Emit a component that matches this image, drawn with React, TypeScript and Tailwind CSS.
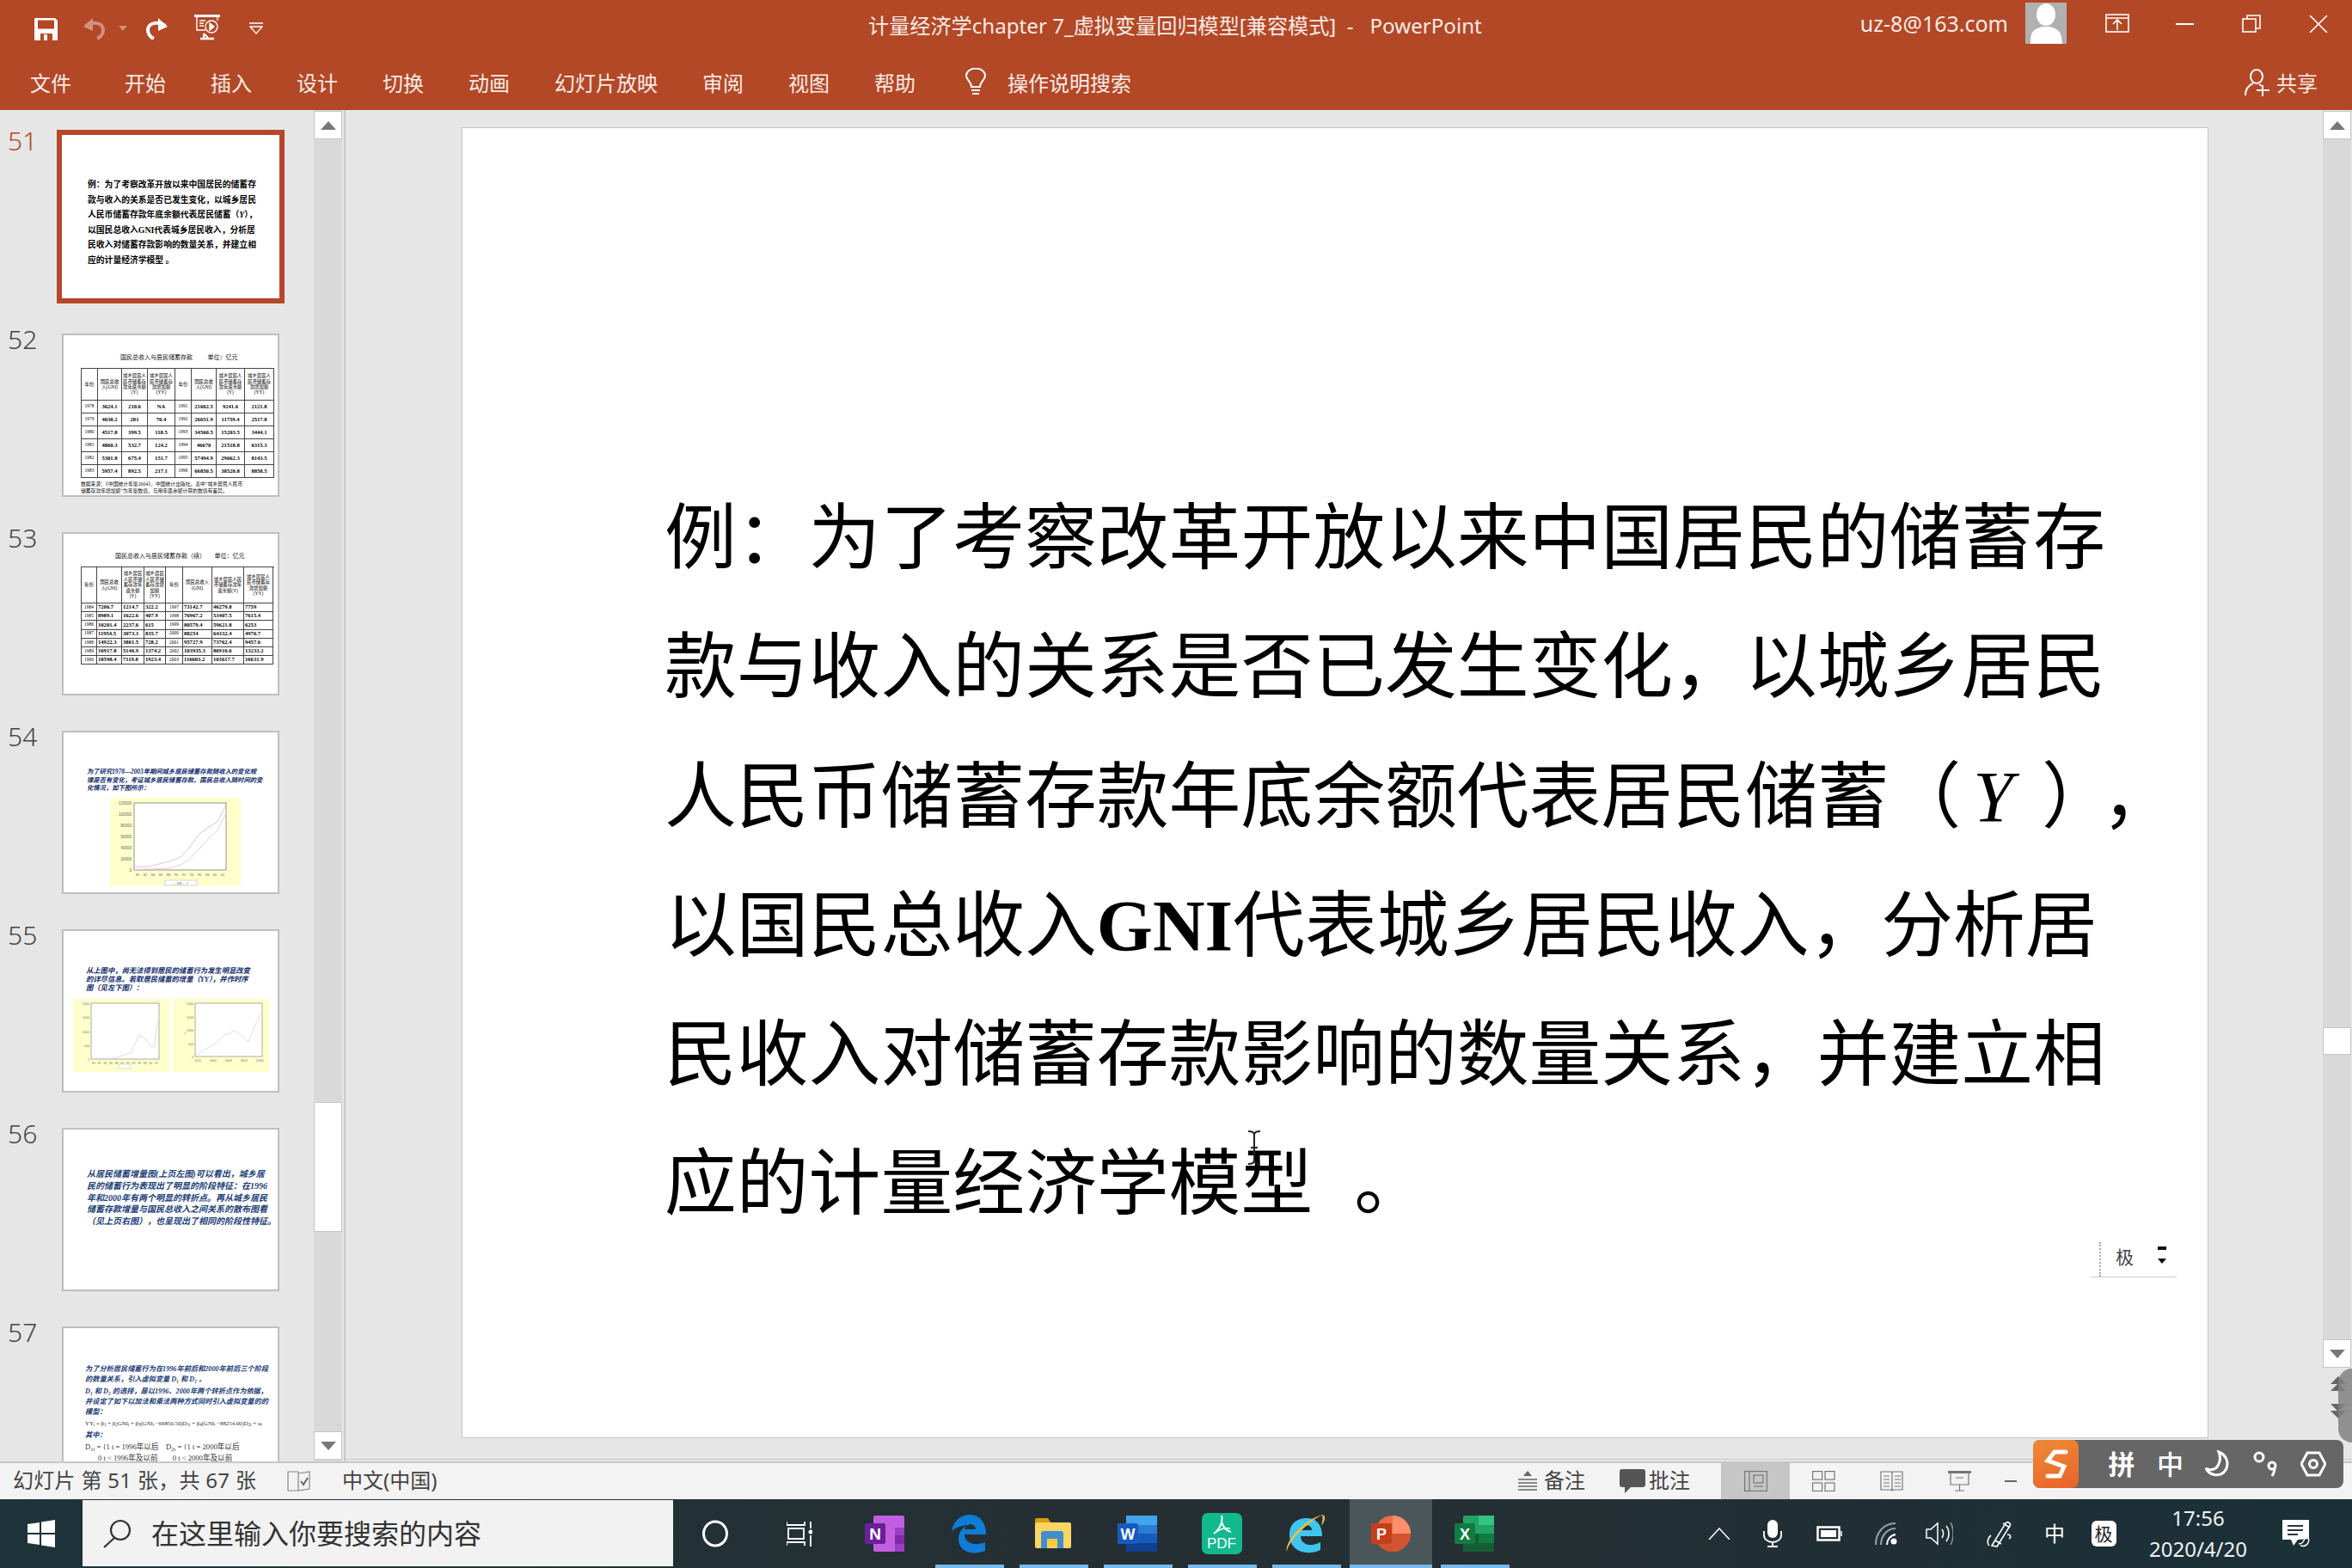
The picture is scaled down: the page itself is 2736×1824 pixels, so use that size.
import React from "react";

const UI = "font-['Noto_Sans','Noto_Sans_CJK_SC',sans-serif]";
const BAR = "bg-[#b34827]";

function Save() {
  return (
    <svg width="27" height="26" viewBox="0 0 27 26" className="mt-1">
      <path fill="#fff" d="M1 0h23l3 3v22a1 1 0 0 1-1 1H1a1 1 0 0 1-1-1V1a1 1 0 0 1 1-1z" />
      <rect x="4" y="2.500" width="19" height="10" fill="#b34827" />
      <rect x="7" y="18" width="14" height="8" fill="#b34827" />
      <rect x="11" y="19" width="4" height="7" fill="#fff" />
    </svg>
  );
}
function Undo({ flip, dim }: { flip?: boolean; dim?: boolean }) {
  return (
    <svg width="28" height="26" viewBox="0 0 28 26" className={(flip ? "-scale-x-100 " : "") + (dim ? "opacity-40" : "")}>
      <path d="M4 10 C 9 5, 24 5, 24 15 C 24 20, 20 24, 17 25" fill="none" stroke="#fff" strokeWidth="4" />
      <path d="M1 11 L12 1 L12 16 Z" fill="#fff" />
    </svg>
  );
}
function Present() {
  return (
    <svg width="32" height="30" viewBox="0 0 32 30" fill="none" stroke="#fff" strokeWidth="1.4">
      <path d="M1 1.5h30" strokeWidth="3" />
      <path d="M4 2v16h10M28 2v5" />
      <path d="M7 7h7M7 10h5M7 13h5" />
      <circle cx="21" cy="14" r="7" />
      <path d="M19 10l5 4-5 4z" fill="#fff" />
      <path d="M8 28h16" strokeWidth="2.5" />
      <path d="M12 22l5 5M12 22v5" strokeWidth="2" />
    </svg>
  );
}
function Bulb() {
  return (
    <svg width="26" height="34" viewBox="0 0 26 34" fill="none" stroke="#fff" strokeWidth="2">
      <path d="M8 22 C 8 16 2 14 2 9 A 11 8.5 0 0 1 24 9 C 24 14 18 16 18 22 Z" />
      <path d="M8 26h10M9 30h8" />
    </svg>
  );
}
function Share() {
  return (
    <svg width="30" height="32" viewBox="0 0 30 32" fill="none" stroke="#fff" strokeWidth="2">
      <ellipse cx="14" cy="9" rx="7" ry="8" />
      <path d="M1 31 C 1 23 5 19 10 17M17 18 L20 20" />
      <path d="M21 19v13M14 25h15" />
    </svg>
  );
}

function TopBar() {
  const tabs = ["开始", "插入", "设计", "切换", "动画", "幻灯片放映", "审阅", "视图", "帮助"];
  return (
    <header className={`${BAR} h-[128px] shrink-0 text-white ${UI}`}>
      <div className="h-[58px] flex items-start">
        <div className="w-[1010px] shrink-0 flex items-start pt-[17px] pl-[40px]">
          <Save />
          <div className="ml-[29px] mt-[3px]"><Undo dim /></div>
          <svg width="10" height="6" viewBox="0 0 10 6" className="ml-[14px] mt-[13px] opacity-40"><path d="M0 0h10L5 6z" fill="#fff" /></svg>
          <div className="ml-[20px] mt-[3px]"><Undo flip /></div>
          <div className="ml-[29px]"><Present /></div>
          <svg width="16" height="14" viewBox="0 0 16 14" className="ml-[33px] mt-[9px]" fill="none" stroke="#fff" strokeWidth="1.3"><path d="M0 1h16M1 5l7 8 7-8z" /></svg>
        </div>
        <div className="pt-[13px] text-[24.15px] leading-[34px] whitespace-pre text-[#f7ebe6]">计量经济学chapter 7_虚拟变量回归模型[兼容模式]  -   PowerPoint</div>
        <div className="ml-auto flex items-start">
          <div className="pt-[9px] text-[25px] leading-[36px] mr-[20px] text-[#f7ebe6]">uz-8@163.com</div>
          <div className="w-[48px] h-[48px] mt-[3px] bg-[#b0b0b0] overflow-hidden">
            <svg width="48" height="48" viewBox="0 0 48 48"><ellipse cx="24" cy="14" rx="11" ry="13" fill="#fff" /><path d="M6 48 C 6 32 10 31 20 28h8 C 38 31 42 32 43 48z" fill="#fff" /></svg>
          </div>
          <svg width="28" height="22" viewBox="0 0 28 22" className="ml-[45px] mt-[16px]" fill="none" stroke="#fff" strokeWidth="1.6"><rect x="1" y="1" width="26" height="20" /><path d="M1 5h26M14 19V8M9 12l5-5 5 5" /></svg>
          <div className="ml-[54px] mt-[27px] w-[21px] h-[2px] bg-white" />
          <svg width="22" height="21" viewBox="0 0 22 21" className="ml-[56px] mt-[17px]" fill="none" stroke="#fff" strokeWidth="1.6"><rect x="1" y="5" width="15" height="15" /><path d="M6 5V1h15v15h-5" /></svg>
          <svg width="22" height="20" viewBox="0 0 22 20" className="ml-[56px] mt-[18px] mr-[28px]" fill="none" stroke="#fff" strokeWidth="1.6"><path d="M1 0l20 20M21 0L1 20" /></svg>
        </div>
      </div>
      <div className="h-[70px] flex items-start pl-[35px] pt-[26px] text-[24px] leading-[26px] text-[#f7ebe6]">
        <span className="mr-[62px]">文件</span>
        <div className="flex gap-[52px]">{tabs.map((t) => <span key={t}>{t}</span>)}</div>
        <div className="ml-[57px] -mt-[5px]"><Bulb /></div>
        <span className="ml-[24px]">操作说明搜索</span>
        <div className="ml-auto flex items-start pr-[40px]">
          <div className="-mt-[4px] mr-[7px]"><Share /></div>
          <span>共享</span>
        </div>
      </div>
    </header>
  );
}

function ScrollBtn({ dir }: { dir: "up" | "down" }) {
  return (
    <div className="h-[33px] bg-white border border-[#c6c6c6] flex items-center justify-center shrink-0">
      <svg width="18" height="10" viewBox="0 0 18 10"><path d={dir === "up" ? "M9 0l9 10H0z" : "M0 0h18L9 10z"} fill="#777" /></svg>
    </div>
  );
}

function Cell({ children, bold, tall, left }: { children?: React.ReactNode; bold?: boolean; tall?: boolean; left?: boolean }) {
  return (
    <div className={`border-r border-b border-[#444] flex items-center text-center overflow-hidden text-black ${left ? "justify-start pl-[1px]" : "justify-center"} ${bold ? "font-bold text-[6.6px]" : "text-[5.4px]"} ${tall ? "leading-[6.4px] px-[1px]" : "leading-none"}`}>
      {children}
    </div>
  );
}

const H52 = ["年份", "国民总收入(GNI)", "城乡居民人民币储蓄存款年底余额(Y)", "城乡居民人民币储蓄存款增加额(YY)"];
const R52 = [
  "1978 3624.1 210.6 NA 1991 21662.5 9241.6 2121.8",
  "1979 4038.2 281 70.4 1992 26651.9 11759.4 2517.8",
  "1980 4517.8 399.5 118.5 1993 34560.5 15203.5 3444.1",
  "1981 4860.3 532.7 124.2 1994 46670 21518.8 6315.3",
  "1982 5301.8 675.4 151.7 1995 57494.9 29662.3 8143.5",
  "1983 5957.4 892.5 217.1 1996 66850.5 38520.8 8858.5",
];
const R53 = [
  "1984 7206.7 1214.7 322.2 1997 73142.7 46279.8 7759",
  "1985 8989.1 1622.6 407.9 1998 76967.2 53407.5 7615.4",
  "1986 10201.4 2237.6 615 1999 80579.4 59621.8 6253",
  "1987 11954.5 3073.3 835.7 2000 88254 64332.4 4976.7",
  "1988 14922.3 3801.5 728.2 2001 95727.9 73762.4 9457.6",
  "1989 16917.8 5146.9 1374.2 2002 103935.3 86910.6 13233.2",
  "1990 18598.4 7119.8 1923.4 2003 116603.2 103617.7 16631.9",
];

function DataGrid({ rows, cls, left }: { rows: string[]; cls: string; left?: boolean }) {
  return (
    <div className={`grid border-l border-t border-[#444] ${cls}`}>
      {[...H52, ...H52].map((h, i) => <Cell key={i} tall>{h}</Cell>)}
      {rows.flatMap((r, ri) => r.split(" ").map((c, i) => <Cell key={ri + "-" + i} left={left && i % 4 !== 0} bold={i % 4 !== 0}>{c}</Cell>))}
    </div>
  );
}

function Thumb({ n, selected, children }: { n: number; selected?: boolean; children?: React.ReactNode }) {
  return (
    <div className="flex h-[190px] mb-[41px] shrink-0">
      <div className={`w-[72px] pl-[9px] -mt-[13px] text-[30px] leading-[40px] font-light ${selected ? "text-[#b7472a]" : "text-[#444]"}`}>{n}</div>
      <div className={`w-[253px] h-[190px] bg-white overflow-hidden ${selected ? "outline-[6px] outline-solid outline-[#b7472a]" : "border-2 border-[#bfbfbf]"} font-['Liberation_Serif','Noto_Sans_CJK_SC',serif]`}>
        {children}
      </div>
    </div>
  );
}

function Chart54() {
  return (
    <svg width="152" height="103" viewBox="0 0 152 103" className="block">
      <rect width="152" height="103" fill="#ffffcc" />
      <rect x="28" y="6" width="107" height="78" fill="#fff" stroke="#777" strokeWidth="0.8" />
      {["120000", "100000", "80000", "60000", "40000", "20000", "0"].map((t, i) => (
        <text key={t} x="25" y={8 + i * 13} fontSize="4.5" textAnchor="end" fill="#666" fontFamily="Liberation Sans">{t}</text>
      ))}
      {["80", "82", "84", "86", "88", "90", "92", "94", "96", "98", "00", "02"].map((t, i) => (
        <text key={t} x={32 + i * 9} y="91" fontSize="4" textAnchor="middle" fill="#666" fontFamily="Liberation Sans">{t}</text>
      ))}
      <path d="M28 81 L45 80 L69 74 L82 69 L92 58 L105 41 L115 34 L125 28 L135 8" fill="none" stroke="#c6c3e8" strokeWidth="0.9" />
      <path d="M28 83.5 L69 82 L82 78 L92 72 L105 58 L115 47 L125 38 L135 18" fill="none" stroke="#ecc6d6" strokeWidth="0.9" />
      <rect x="64" y="96" width="37" height="6" fill="#fff" stroke="#999" strokeWidth="0.4" />
      <text x="82" y="101" fontSize="3.5" textAnchor="middle" fill="#666" fontFamily="Liberation Sans">— GNI — Y</text>
    </svg>
  );
}
function ChartSmall({ labels, xl, d, w, px, pw, ph, ylabel }: { labels: string[]; xl: string[]; d: string; w: number; px: number; pw: number; ph: number; ylabel?: boolean }) {
  return (
    <svg width={w} height="85" viewBox={`0 0 ${w} 85`} className="block">
      <rect width={w} height="85" fill="#ffffcc" />
      <rect x={px} y="5" width={pw} height={ph} fill="#fff" stroke="#888" strokeWidth="0.7" />
      {labels.map((t, i) => (
        <text key={t} x={px - 2} y={7 + i * (ph / (labels.length - 1))} fontSize="3.6" textAnchor="end" fill="#777" fontFamily="Liberation Sans">{t}</text>
      ))}
      {xl.map((t, i) => (
        <text key={t + i} x={px + 3 + i * ((pw - 6) / (xl.length - 1))} y={ph + 11} fontSize="3.4" textAnchor="middle" fill="#777" fontFamily="Liberation Sans">{t}</text>
      ))}
      <path d={d} fill="none" stroke="#dcdcf2" strokeWidth="1" />
      {ylabel ? <text x={px / 2} y="42" fontSize="3.5" fill="#777" fontFamily="Liberation Sans">Y</text> : <rect x={px + 32} y="76" width="14" height="5" fill="#fff" stroke="#aaa" strokeWidth="0.4" />}
    </svg>
  );
}

const BLUE = "text-[#0f2a6b] font-bold italic";

function Sidebar() {
  return (
    <aside className="w-[402px] shrink-0 flex bg-[#e6e6e6] border-r-2 border-[#c8c8c8] h-full overflow-hidden">
      <div className={`w-[365px] shrink-0 pt-[29px] h-full overflow-hidden ${UI}`}>
        <Thumb n={51} selected>
          <div className="pt-[49px] pl-[30px] text-[9.8px] leading-[17.5px] font-bold text-black whitespace-nowrap">
            <p>例：为了考察改革开放以来中国居民的储蓄存</p>
            <p>款与收入的关系是否已发生变化，以城乡居民</p>
            <p>人民币储蓄存款年底余额代表居民储蓄（<i>Y</i>），</p>
            <p>以国民总收入GNI代表城乡居民收入，分析居</p>
            <p>民收入对储蓄存款影响的数量关系，并建立相</p>
            <p>应的计量经济学模型 。</p>
          </div>
        </Thumb>
        <Thumb n={52}>
          <div className="pt-[21px] pl-[20px]">
            <div className="h-[17px] text-[7px] leading-[10px] text-[#111] whitespace-pre pl-[46px]">国民总收入与居民储蓄存款          单位：亿元</div>
            <div className="w-[225px]"><DataGrid rows={R52} cls="grid-cols-[19px_28px_30px_32px_19px_29px_33px_34px] grid-rows-[37px_repeat(6,15px)]" /></div>
            <div className="mt-[3px] text-[5.8px] leading-[8px] text-[#111] whitespace-nowrap">数据来源：《中国统计年鉴2004》，中国统计出版社。表中“城乡居民人民币</div>
            <div className="text-[5.8px] leading-[8px] text-[#111] whitespace-nowrap">储蓄存款年增加额”为年鉴数值，与用年底余额计算的数值有差异。</div>
          </div>
        </Thumb>
        <Thumb n={53}>
          <div className="pt-[21px] pl-[20px]">
            <div className="h-[17px] text-[7px] leading-[10px] text-[#111] whitespace-pre pl-[40px]">国民总收入与居民储蓄存款（续）      单位：亿元</div>
            <div className="w-[225px]"><DataGrid left rows={R53} cls="grid-cols-[18px_29px_26px_25px_20px_34px_37px_34px] grid-rows-[42px_repeat(7,10.2px)]" /></div>
          </div>
        </Thumb>
        <Thumb n={54}>
          <div className="pt-[41px] pl-[27px]">
            <div className={`${BLUE} text-[7.3px] leading-[9.6px] whitespace-nowrap`}>
              <p>为了研究1978—2003年期间城乡居民储蓄存款随收入的变化规</p>
              <p>律是否有变化，考证城乡居民储蓄存款、国民总收入随时间的变</p>
              <p>化情况，如下图所示：</p>
            </div>
            <div className="ml-[27px] mt-[6px]"><Chart54 /></div>
          </div>
        </Thumb>
        <Thumb n={55}>
          <div className="pt-[42px] pl-[11px]">
            <div className={`${BLUE} pl-[15px] text-[8.3px] leading-[10px] whitespace-nowrap`}>
              <p>从上图中，尚无法得到居民的储蓄行为发生明显改变</p>
              <p>的详尽信息。若取居民储蓄的增量（YY），并作时序</p>
              <p>图（见左下图）：</p>
            </div>
            <div className="flex gap-[4px] mt-[7px]">
              <ChartSmall w={112} px={21} pw={79} ph={65} labels={["2000", "1500", "1000", "500", "0"]} xl={["80", "82", "84", "86", "88", "90", "92", "94", "96", "98", "00", "02"]} d="M21 69 L45 69 L55 67 L68 62 L72 52 L77 42 L84 46 L90 55 L94 56 L100 20" />
              <ChartSmall ylabel w={112} px={26} pw={78} ph={62} labels={["2000", "1500", "1000", "500", "0"]} xl={["2000", "4000", "6000", "8000", "10000"]} d="M26 66 L35 60 L48 53 L60 42 L72 37 L80 43 L88 50 L95 32 L104 14" />
            </div>
          </div>
        </Thumb>
        <Thumb n={56}>
          <div className="pt-[45px] pl-[27px]">
            <div className="text-[#1a4078] font-bold italic text-[10px] leading-[13.8px] whitespace-nowrap">
              <p>从居民储蓄增量图(上页左图)可以看出，城乡居</p>
              <p>民的储蓄行为表现出了明显的阶段特征：在1996</p>
              <p>年和2000年有两个明显的转折点。再从城乡居民</p>
              <p>储蓄存款增量与国民总收入之间关系的散布图看</p>
              <p>（见上页右图），也呈现出了相同的阶段性特征。</p>
            </div>
          </div>
        </Thumb>
        <Thumb n={57}>
          <div className="pt-[42px] pl-[25px]">
            <div className="text-[#1a4078] font-bold italic text-[8.2px] leading-[12px] whitespace-nowrap">
              <p>为了分析居民储蓄行为在1996年前后和2000年前后三个阶段</p>
              <p>的数量关系，引入虚拟变量 D₁ 和 D₂ 。</p>
              <p className="mt-[2px]">D₁ 和 D₂ 的选择，是以1996、2000年两个转折点作为依据，</p>
              <p>并设定了如下以加法和乘法两种方式同时引入虚拟变量的的</p>
              <p>模型：</p>
              <p className="not-italic font-normal text-[#333] text-[6.8px] leading-[14px]">YY<sub>t</sub> = β<sub>1</sub> + β<sub>2</sub>GNI<sub>t</sub> + β<sub>3</sub>(GNI<sub>t</sub> −66850.50)D<sub>1t</sub> + β<sub>4</sub>(GNI<sub>t</sub> −88254.00)D<sub>2t</sub> + u<sub>t</sub></p>
              <p className="leading-[14px]">其中：</p>
              <p className="not-italic font-normal text-[#333] text-[8.6px] leading-[13px]">D<sub>1t</sub> = {"{"}1  t = 1996年以后　D<sub>2t</sub> = {"{"}1  t = 2000年以后</p>
              <p className="not-italic font-normal text-[#333] text-[8.6px] leading-[12px] pl-[15px]">0  t &lt; 1996年及以前　　0  t &lt; 2000年及以前</p>
            </div>
          </div>
        </Thumb>
      </div>
      <div className="w-[33px] shrink-0 h-full bg-[#d9d9d9] flex flex-col pt-px pb-[2px]">
        <ScrollBtn dir="up" />
        <div className="flex-1 pt-[1120px]"><div className="h-[151px] bg-white border border-[#c6c6c6]" /></div>
        <ScrollBtn dir="down" />
      </div>
    </aside>
  );
}

function Main() {
  const cjk = "font-['Liberation_Serif','Noto_Sans_CJK_SC',serif]";
  return (
    <main className="flex-1 min-w-0 flex flex-col h-full bg-[#e6e6e6]">
      <div className="flex-1 min-h-0 flex border-b border-[#c8c8c8] mb-[2px]">
        <div className="flex-1 pl-[135px] pt-[20px]">
          <div className={`relative w-[2032px] h-[1525px] bg-white border border-[#c4c4c4] pl-[235px] pt-[403px] ${cjk}`}>
            <div className="text-[83.8px] leading-[150.3px] text-black whitespace-nowrap font-normal">
              <p>例：为了考察改革开放以来中国居民的储蓄存</p>
              <p>款与收入的关系是否已发生变化，以城乡居民</p>
              <p>人民币储蓄存款年底余额代表居民储蓄（<i className="ml-[14px] mr-[33px]">Y</i><span className="mr-[28px]">）</span>，</p>
              <p>以国民总收入<b>GNI</b>代表城乡居民收入，分析居</p>
              <p>民收入对储蓄存款影响的数量关系，并建立相</p>
              <p>应的计量经济学模型<span className="ml-[48px]">。</span></p>
            </div>
            <div className={`absolute left-[1894px] top-[1297px] w-[100px] h-[40px] border-b border-[#ccc] ${UI}`}>
              <div className="absolute left-[10px] -top-[1px] h-[40px] border-l-2 border-dotted border-[#aaa]" />
              <span className="absolute left-[29px] top-[1px] text-[21px] leading-[30px] text-[#444]">极</span>
              <svg width="10" height="20" viewBox="0 0 10 20" className="absolute left-[78px] top-[4px]"><path d="M0 0h10v4H0z M0 14h10L5 20z" fill="#111" /></svg>
            </div>
            <svg width="22" height="40" viewBox="0 0 22 40" className="absolute left-[910px] top-[1166px]" fill="none" stroke="#222" strokeWidth="2"><path d="M4 1c4 0 7 1 7 4v30c0 3-3 4-7 4M18 1c-4 0-7 1-7 4M18 39c-4 0-7-1-7-4M7 20h8" /></svg>
          </div>
        </div>
        <div className="w-[33px] mr-px shrink-0 bg-[#e6e6e6] flex flex-col pt-px">
          <ScrollBtn dir="up" />
          <div className="h-[1396px] bg-[#d9d9d9] pt-[1033px]"><div className="h-[32px] bg-white border border-[#c6c6c6]" /></div>
          <ScrollBtn dir="down" />
          <div className="pt-[10px] flex flex-col items-center gap-[14px] pl-[2px]">
            <svg width="18" height="18" viewBox="0 0 18 18"><path d="M9 0l9 9H0zM9 8l9 9H0z" fill="#666" /></svg>
            <svg width="18" height="18" viewBox="0 0 18 18"><path d="M0 0h18L9 9zM0 8h18L9 17z" fill="#666" /></svg>
          </div>
        </div>
      </div>
    </main>
  );
}

function StatusBar() {
  return (
    <footer className={`h-[44px] shrink-0 bg-[#f3f3f3] border-t-2 border-[#c8c8c8] flex items-center pl-[15px] text-[#444] text-[24px] leading-[36px] ${UI}`}>
      <span className="w-[283px] shrink-0 whitespace-nowrap -mt-[3px] tracking-[0.3px]">幻灯片 第 51 张，共 67 张</span>
      <svg width="28" height="25" viewBox="0 0 28 25" className="ml-[36px] shrink-0" fill="none" stroke="#888" strokeWidth="1.2"><path d="M1 1h12v22H1zM13 3l13-2v20l-13 2z" /><path d="M16 12l3 4 5-8" stroke="#666" strokeWidth="2" /></svg>
      <span className="ml-[36px] w-[112px] shrink-0 whitespace-nowrap -mt-[3px]">中文(中国)</span>
      <svg width="22" height="24" viewBox="0 0 22 24" className="ml-[1256px] shrink-0" fill="none" stroke="#666" strokeWidth="1.5"><path d="M11 0l5 6H6z" fill="#666" stroke="none" /><path d="M0 10h22M0 14h22M0 18h22M0 22h22" /></svg>
      <span className="ml-[8px] w-[48px] shrink-0 -mt-[3px]">备注</span>
      <svg width="30" height="28" viewBox="0 0 30 28" className="ml-[40px] shrink-0"><path d="M3 0h24a3 3 0 0 1 3 3v15a3 3 0 0 1-3 3H13l-7 7v-7H3a3 3 0 0 1-3-3V3a3 3 0 0 1 3-3z" fill="#555" /></svg>
      <span className="ml-[4px] w-[48px] shrink-0 -mt-[3px]">批注</span>
      <div className="ml-[36px] w-[80px] h-full shrink-0 bg-[#c6c6c6] flex items-center justify-center">
        <svg width="27" height="24" viewBox="0 0 27 24" fill="none" stroke="#777" strokeWidth="1.2"><rect x="0.6" y="0.6" width="25.8" height="22.8" /><path d="M6 1v22" /><rect x="11" y="5" width="11" height="9" /><path d="M11 18h11" /></svg>
      </div>
      <div className="w-[79px] shrink-0 flex justify-center">
        <svg width="27" height="24" viewBox="0 0 27 24" fill="none" stroke="#777" strokeWidth="1.2"><rect x="0.6" y="0.6" width="11" height="9.5" /><rect x="15" y="0.6" width="11" height="9.5" /><rect x="0.6" y="14" width="11" height="9.5" /><rect x="15" y="14" width="11" height="9.5" /></svg>
      </div>
      <div className="w-[79px] shrink-0 flex justify-center">
        <svg width="27" height="24" viewBox="0 0 27 24" fill="none" stroke="#777" strokeWidth="1.2"><path d="M1 1h12l1 1 1-1h11v21H15l-1 1-1-1H1zM14 2v20M4 6h7M4 10h7M4 14h7M4 18h7M17 6h7M17 10h7M17 14h7M17 18h7" /></svg>
      </div>
      <div className="w-[79px] shrink-0 flex justify-center">
        <svg width="27" height="24" viewBox="0 0 27 24" fill="none" stroke="#777" strokeWidth="1.2"><path d="M0 1.5h27" strokeWidth="3" /><path d="M3 2v14h21V2M13.500 16v7M8 23h11M9 8h9" /></svg>
      </div>
      <div className="ml-[13px] w-[14px] h-[2px] bg-[#666] shrink-0" />
    </footer>
  );
}

function AppIcon({ children, active, wide }: { children: React.ReactNode; active?: boolean; wide?: boolean }) {
  return (
    <div className={`relative shrink-0 h-full flex items-center justify-center ${wide ? "w-[96px] bg-[#4b565a] ml-[2px]" : "w-[98px]"}`}>
      {children}
      {active && <div className={`absolute bottom-0 h-[4px] bg-[#76b9ed] ${wide ? "left-0 right-0" : "left-[10px] w-[80px]"}`} />}
    </div>
  );
}

const iconText = { fontFamily: "Liberation Sans", fontWeight: 700, fill: "#fff" } as const;

function Taskbar() {
  return (
    <div className={`relative h-[80px] shrink-0 flex bg-[linear-gradient(90deg,#1e333a,#252f33_45%,#252f33_60%,#1b3038)] text-white ${UI}`}>
      <div className="w-[96px] shrink-0 flex items-center justify-center">
        <svg width="32" height="32" viewBox="0 0 32 32"><path d="M0 5l14-2v12H0zM16 2.500L32 0v15H16zM0 17h14v12L0 27zM16 17h16v15l-16-2.500z" fill="#fff" /></svg>
      </div>
      <div className="w-[687px] shrink-0 mt-px mb-[2px] bg-[#f2f2f2] flex items-center pl-[24px] text-[#333] text-[32px] leading-[40px]">
        <svg width="34" height="34" viewBox="0 0 34 34" fill="none" stroke="#333" strokeWidth="2.2"><circle cx="20" cy="13" r="11" /><path d="M13 22L1 33" /></svg>
        <span className="ml-[22px] whitespace-nowrap">在这里输入你要搜索的内容</span>
      </div>
      <div className="w-[97px] shrink-0 flex items-center justify-center">
        <svg width="32" height="32" viewBox="0 0 32 32" fill="none" stroke="#fff" strokeWidth="3"><ellipse cx="16" cy="16" rx="13.500" ry="14" /></svg>
      </div>
      <div className="w-[100px] shrink-0 flex items-center justify-center">
        <svg width="30" height="30" viewBox="0 0 30 30" fill="none" stroke="#fff" strokeWidth="1.8"><path d="M0 1v4h21V1M2 9h18v12H2zM0 29v-4h21v4M28 1v8M28 17v13" /><circle cx="28" cy="13" r="2.500" fill="#fff" stroke="none" /></svg>
      </div>
      <AppIcon>
        <svg width="48" height="44" viewBox="0 0 48 44"><rect x="11" y="1" width="36" height="42" rx="2" fill="#c15fe0" /><rect x="36" y="15" width="11" height="28" fill="#9a3fc0" /><rect x="36" y="24" width="11" height="10" fill="#7e2aa8" /><rect x="1" y="10" width="24" height="24" rx="2" fill="#6b1f9a" /><text x="13" y="29" fontSize="19" textAnchor="middle" style={iconText}>N</text></svg>
      </AppIcon>
      <AppIcon active>
        <svg width="42" height="46" viewBox="0 0 42 46"><path d="M1 20C3 8 12 1 22 1c12 0 19 9 19 23H16c0 10 12 14 24 9v10c-12 5-31 3-31-14 0-8 5-14 12-16-8 0-15 3-20 7z M16 18h13c0-7-11-8-13 0z" fill="#0f7cd6" fillRule="evenodd" /></svg>
      </AppIcon>
      <AppIcon active>
        <svg width="44" height="36" viewBox="0 0 44 36"><path d="M1 2a2 2 0 0 1 2-2h13l4 6h-19z" fill="#d99c0e" /><rect x="1" y="5" width="42" height="30" rx="2" fill="#fbd561" /><path d="M8 35V18a3 3 0 0 1 3-3h20a3 3 0 0 1 3 3v17h-7V24H15v11z" fill="#3f8fd0" /><rect x="15" y="24" width="12" height="9" fill="#ffcb3d" /></svg>
      </AppIcon>
      <AppIcon active>
        <svg width="48" height="44" viewBox="0 0 48 44"><rect x="11" y="1" width="36" height="42" rx="2" fill="#2b7cd3" /><rect x="11" y="1" width="36" height="11" fill="#41a5ee" /><rect x="11" y="22" width="36" height="11" fill="#185abd" /><rect x="11" y="33" width="36" height="10" fill="#103f91" /><rect x="1" y="10" width="24" height="24" rx="2" fill="#185abd" /><text x="13" y="29" fontSize="18" textAnchor="middle" style={iconText}>W</text></svg>
      </AppIcon>
      <AppIcon active>
        <div className="w-[47px] h-[48px] rounded-[7px] bg-[#12b98c] flex flex-col items-center justify-end text-[17px] leading-[20px] pb-[2px]">
          <svg width="24" height="24" viewBox="0 0 24 24" fill="none" stroke="#fff" strokeWidth="2"><path d="M12 1c2 8-3 17-9 21M12 8c2 7 6 11 11 12" /><path d="M6 20c5-4 10-5 16-4" strokeWidth="1.500" /></svg>
          <span className="font-['Liberation_Sans',sans-serif]">PDF</span>
        </div>
      </AppIcon>
      <AppIcon active>
        <svg width="48" height="46" viewBox="0 0 48 46"><path d="M5 24C5 11 14 5 25 5c12 0 18 9 18 21H18c0 10 12 13 23 7v9c-14 7-36 3-36-18z M18 19h13c0-7-12-8-13 0z" fill="#3fc6ef" fillRule="evenodd" /><path d="M2 44C-2 34 22 6 44 1c-14 5-42 32-42 43z" fill="#e7c04c" /><path d="M42 1c7 0 4 8 0 13 1-5 3-11 0-13z" fill="#e7c04c" /></svg>
      </AppIcon>
      <AppIcon active wide>
        <svg width="48" height="44" viewBox="0 0 48 44"><circle cx="26" cy="22" r="21" fill="#ed6c47" /><path d="M26 1a21 21 0 0 1 21 21H26z" fill="#ff8f6b" /><path d="M26 22h21a21 21 0 0 1-21 21z" fill="#d35230" /><path d="M26 22H5a21 21 0 0 0 21 21z" fill="#d35230" /><rect x="1" y="10" width="24" height="24" rx="2" fill="#c43e1c" /><text x="13" y="29" fontSize="18" textAnchor="middle" style={iconText}>P</text></svg>
      </AppIcon>
      <AppIcon active>
        <svg width="48" height="44" viewBox="0 0 48 44"><rect x="11" y="1" width="36" height="42" rx="2" fill="#21a366" /><rect x="29" y="1" width="18" height="11" fill="#33c481" /><rect x="29" y="22" width="18" height="11" fill="#107c41" /><rect x="11" y="22" width="18" height="21" fill="#185c37" /><rect x="29" y="33" width="18" height="10" fill="#185c37" /><rect x="1" y="10" width="24" height="24" rx="2" fill="#107c41" /><text x="13" y="29" fontSize="18" textAnchor="middle" style={iconText}>X</text></svg>
      </AppIcon>

      <div className="ml-auto flex items-center pr-[29px]">
        <div className="w-[62px] flex justify-center"><svg width="26" height="14" viewBox="0 0 26 14" fill="none" stroke="#fff" strokeWidth="1.5"><path d="M1 14L13 1l12 13" /></svg></div>
        <div className="w-[62px] flex justify-center"><svg width="24" height="32" viewBox="0 0 24 32" fill="none" stroke="#fff" strokeWidth="1.8"><rect x="6" y="0" width="12" height="21" rx="6" fill="#fff" stroke="none" /><path d="M2 13v5a10 8 0 0 0 20 0v-5M12 26v5M6 31h12" /></svg></div>
        <div className="w-[70px] flex justify-center"><svg width="30" height="18" viewBox="0 0 30 18" fill="none" stroke="#fff" strokeWidth="2.500"><rect x="1.500" y="1.500" width="25" height="15" /><rect x="5" y="5" width="18" height="8" fill="#fff" stroke="none" /><path d="M29 6v6" strokeWidth="1.500" /></svg></div>
        <div className="w-[62px] flex justify-center"><svg width="26" height="26" viewBox="0 0 26 26" fill="none" stroke="#9aa3a6" strokeWidth="2"><path d="M1 26C1 12 10 1 24 1M7 26C7 16 14 7 24 7" /><path d="M14 26c0-6 4-11 10-12" stroke="#fff" /><circle cx="22" cy="22" r="3.500" fill="#fff" stroke="none" /></svg></div>
        <div className="w-[62px] flex justify-center"><svg width="32" height="28" viewBox="0 0 32 28" fill="none" stroke="#fff" strokeWidth="1.5"><path d="M1 9h5l8-7v24l-8-7H1z" /><path d="M19 9c2 3 2 7 0 10" /><path d="M24 5c4 5 4 13 0 18" /><path d="M29 1c4 7 4 19 0 26" stroke="#8c9598" /></svg></div>
        <div className="w-[80px] flex justify-center"><svg width="32" height="32" viewBox="0 0 32 32" fill="none" stroke="#fff" strokeWidth="1.6"><path d="M6 30L22 4c2-3 7 0 5 3L12 31zM10 24l7 4M19 4l8 5" /><path d="M5 18c-4 3-5 9-2 12M24 17c4 0 5 3 2 5" /></svg></div>
        <div className="w-[46px] text-center text-[24px]">中</div>
        <div className="w-[68px] flex justify-center"><div className="w-[29px] h-[30px] rounded-[6px] bg-white text-[#222] text-[21px] leading-[30px] text-center">极</div></div>
        <div className="w-[152px] text-center text-[24px] leading-[36px] text-[#eef2f3]"><div>17:56</div><div>2020/4/20</div></div>
        <div className="w-[74px] flex justify-center"><svg width="33" height="32" viewBox="0 0 33 32"><path d="M1 0h31v22l-13 1-5 7-3-7H1z" fill="#fff" /><path d="M7 7h18M7 12h18M7 17h12" stroke="#27363c" strokeWidth="2" /><path d="M22 30c8 2 11-4 9-10M27 22c-2 4-3 6-7 6" fill="none" stroke="#fff" strokeWidth="1.5" /></svg></div>
      </div>
    </div>
  );
}

function Sogou() {
  return (
    <div className={`absolute left-[2365px] top-[1675px] w-[361px] h-[56px] rounded-[8px] bg-[#666] flex items-center text-white ${UI}`}>
      <div className="w-[53px] h-full rounded-[8px] bg-[linear-gradient(160deg,#f08a35,#e8622c)] flex items-center justify-center shrink-0">
        <svg width="30" height="36" viewBox="0 0 30 36" fill="none" stroke="#fff" strokeWidth="5" strokeLinecap="round"><path d="M26 4H13L5 14l19 7-5 11H5" /></svg>
      </div>
      <span className="ml-[33px] w-[34px] text-[31px] leading-[36px] font-bold text-center">拼</span>
      <span className="ml-[24px] w-[30px] text-[31px] leading-[36px] text-center font-medium">中</span>
      <svg width="32" height="32" viewBox="0 0 32 32" className="ml-[24px]" fill="none" stroke="#fff" strokeWidth="3"><path d="M18 2c10 4 12 14 8 21-5 8-18 8-23-2 4 3 11 2 14-3 3-5 3-11 1-16z" /></svg>
      <svg width="30" height="30" viewBox="0 0 30 30" className="ml-[25px]" fill="none" stroke="#fff" strokeWidth="3"><circle cx="8" cy="7" r="5" /><circle cx="23" cy="17" r="4" /><path d="M26 19c0 4-1 7-3 10" /></svg>
      <svg width="30" height="30" viewBox="0 0 30 30" className="ml-[26px]" fill="none" stroke="#fff" strokeWidth="3"><path d="M8 2h14l7 13-7 13H8L1 15z" /><circle cx="15" cy="15" r="4.500" /></svg>
    </div>
  );
}

export default function App() {
  return (
    <div className={`relative w-[2736px] h-[1824px] overflow-hidden flex flex-col bg-[#e6e6e6] ${UI}`}>
      <TopBar />
      <div className="h-[1572px] shrink-0 flex overflow-hidden">
        <Sidebar />
        <Main />
      </div>
      <StatusBar />
      <Taskbar />
      <div className="absolute left-[2720px] top-[1592px] w-[16px] h-[86px] rounded-l-full bg-[#808080]/85" />
      <Sogou />
    </div>
  );
}
